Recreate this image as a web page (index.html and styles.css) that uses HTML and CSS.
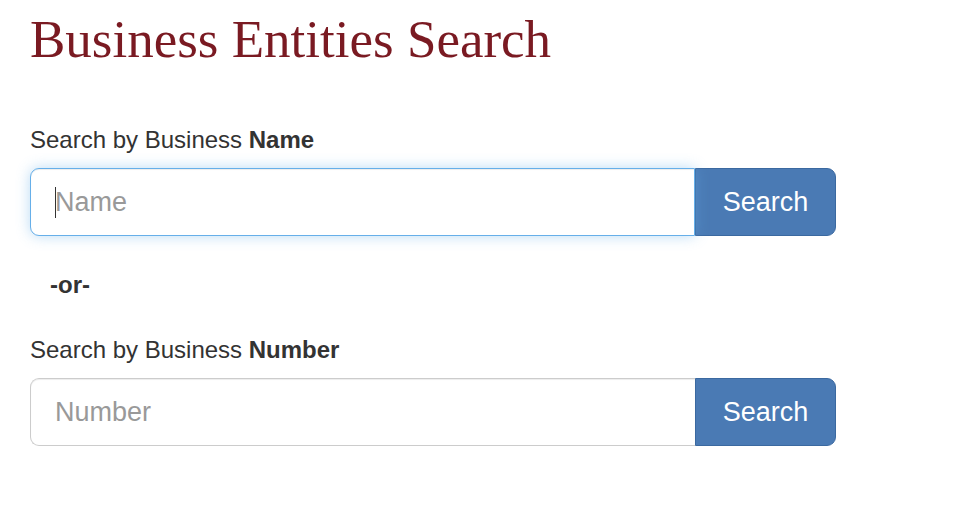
FILE: index.html
```html
<!DOCTYPE html>
<html>
<head>
<meta charset="utf-8">
<link rel="stylesheet" href="styles.css">
</head>
<body>
<div class="page">
  <h1 class="title">Business Entities Search</h1>
  <form class="search-form">
    <div class="form-group">
      <label class="label">Search by Business <b>Name</b></label>
      <div class="input-group">
        <div class="field focused">
          <span class="caret"></span>
          <input class="input" type="text" placeholder="Name">
        </div>
        <button class="btn" type="button">Search</button>
      </div>
    </div>
    <div class="or">-or-</div>
    <div class="form-group">
      <label class="label">Search by Business <b>Number</b></label>
      <div class="input-group">
        <div class="field">
          <input class="input" type="text" placeholder="Number">
        </div>
        <button class="btn" type="button">Search</button>
      </div>
    </div>
  </form>
</div>
</body>
</html>
```

FILE: styles.css
```css
* { box-sizing: border-box; }
html, body { margin: 0; padding: 0; background: #fff; }
body {
  font-family: "Liberation Sans", Arial, Helvetica, sans-serif;
  color: #333;
}
.page {
  padding: 10px 0 0 30px;
  width: 836px;
}
.title {
  font-family: "Liberation Serif", "Times New Roman", serif;
  font-weight: normal;
  font-size: 53px;
  line-height: 58px;
  color: #7a1a22;
  margin: 0 0 55px 0;
}
.form-group { display: flex; flex-direction: column; }
.label {
  font-size: 24px;
  line-height: 34px;
  margin-bottom: 11px;
  color: #333;
}
.label b { font-weight: bold; }
.input-group { display: flex; height: 68px; }
.field {
  position: relative;
  flex: 1;
  border: 1px solid #ccc;
  border-right: none;
  border-radius: 9px 0 0 9px;
  background: #fff;
  box-shadow: inset 0 1px 1px rgba(0,0,0,.075);
}
.field.focused {
  border-color: #66afe9;
  border-right: 1px solid #66afe9;
  box-shadow: inset 0 1px 1px rgba(0,0,0,.075), 0 0 14px rgba(102,175,233,.45);
}
.input {
  width: 100%;
  height: 100%;
  border: none;
  outline: none;
  background: transparent;
  padding: 0 24px;
  font-family: "Liberation Sans", Arial, Helvetica, sans-serif;
  font-size: 27px;
  color: #555;
}
.input::placeholder { color: #999; }
.caret {
  position: absolute;
  left: 24px;
  top: 18px;
  width: 1px;
  height: 31px;
  background: #333;
}
.btn {
  width: 141px;
  height: 68px;
  border: 1px solid #3b69a0;
  border-radius: 0 9px 9px 0;
  background: #4a7ab4;
  color: #fff;
  font-family: "Liberation Sans", Arial, Helvetica, sans-serif;
  font-size: 27px;
  padding: 0;
  cursor: pointer;
}
.or {
  font-weight: bold;
  font-size: 24px;
  line-height: 34px;
  padding-left: 20px;
  margin: 32px 0 31px 0;
}
```
